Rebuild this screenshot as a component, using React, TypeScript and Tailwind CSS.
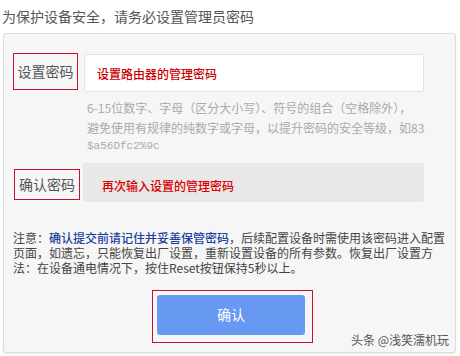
export default function App() {
  const hint = [
    '6-15位数字、字母（区分大小写）、符号的组合（空格除外），',
    '避免使用有规律的纯数字或字母，以提升密码的安全等级，如83',
    '$a56Dfc2%9c',
  ];

  return (
    <div className="w-[460px] h-[356px] bg-white overflow-hidden font-['Noto_Sans_CJK_SC','Noto_Sans',sans-serif]">
      <div className="pl-[2px] pt-[6px] h-[33px] text-[14px] leading-[20px] text-[#555]">
        为保护设备安全，请务必设置管理员密码
      </div>

      <div className="relative ml-[3px] w-[453px] h-[320px] rounded-[3px] border border-[#dcdcdc] bg-[#f6f6f6] shadow-[0_1px_2px_rgba(0,0,0,0.08)]">
        {/* password row */}
        <div className="flex items-start pt-[19px] pl-[9px]">
          <div className="w-[65px] h-[37px] border border-[#c8102e] flex items-center justify-center text-[14px] text-[#555]">
            设置密码
          </div>
          <div className="ml-[6px] mt-[1px] w-[340px] h-[38px] rounded-[2px] border border-[#e2e2e2] bg-white pl-[12px] pt-[10px] text-[12px] leading-[18px] font-medium text-[#cc0000]">
            设置路由器的管理密码
          </div>
        </div>

        <div className="ml-[83px] mt-[6px] text-[12px] leading-[19.5px] text-[#aaa] whitespace-nowrap">
          {hint.map((line, i) => (
            <div key={i} className={i === 2 ? "font-['Liberation_Mono',monospace] text-[11px]" : ''}>{line}</div>
          ))}
        </div>

        {/* confirm row */}
        <div className="flex items-start mt-[6px] pl-[10px]">
          <div className="mt-[6px] w-[66px] h-[31px] border border-[#c8102e] flex items-center justify-center text-[14px] text-[#555]">
            确认密码
          </div>
          <div className="ml-[3px] w-[341px] h-[39px] rounded-[2px] bg-[#e8e8e8] pl-[19px] pt-[14px] text-[12px] leading-[18px] font-medium text-[#dd0000]">
            再次输入设置的管理密码
          </div>
        </div>

        {/* notice */}
        <div className="ml-[9px] mt-[28px] text-[12px] leading-[15px] text-[#444] whitespace-nowrap">
          <div>
            注意：<span className="text-[#1d3f9e] font-medium">确认提交前请记住并妥善保管密码</span>，后续配置设备时需使用该密码进入配置
          </div>
          <div>页面，如遗忘，只能恢复出厂设置，重新设置设备的所有参数。恢复出厂设置方</div>
          <div>法：在设备通电情况下，按住Reset按钮保持5秒以上。</div>
        </div>

        <div className="ml-[148px] mt-[15px] w-[161px] h-[53px] border border-[#c8102e] pl-[4px] pt-[4px]">
          <button className="w-[148px] h-[40px] rounded-[3px] bg-[#6799f3] text-white text-[14px]">
            确认
          </button>
        </div>

        <div className="absolute right-[6px] bottom-[3px] text-[12px] text-[#555]">
          头条 @浅笑濡机玩
        </div>
      </div>
    </div>
  );
}
